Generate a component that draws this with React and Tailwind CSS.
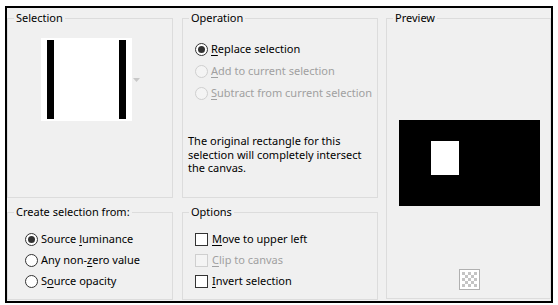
import React from 'react';

const Group = ({ title, className, children }) => (
    <div className={`relative border border-[#dcdcdc] ${className}`}>
        <span className="absolute -top-[9px] left-[6px] bg-[#f0f0f0] px-[2px] leading-[16px] text-black">{title}</span>
        {children}
    </div>
);

const Radio = ({ checked, disabled }) => (
    <span
        className={`flex h-[13px] w-[13px] shrink-0 items-center justify-center rounded-full border ${
            disabled ? 'border-[#cfcfcf] bg-[#f4f4f4]' : 'border-[#333333] bg-white'
        }`}
    >
        {checked && <span className="h-[7px] w-[7px] rounded-full bg-[#333333]" />}
    </span>
);

const Check = ({ disabled }) => (
    <span
        className={`block h-[13px] w-[13px] shrink-0 border ${
            disabled ? 'border-[#cfcfcf] bg-[#f4f4f4]' : 'border-[#333333] bg-white'
        }`}
    />
);

// label with the access key underlined
const Label = ({ before = '', keyChar, after, disabled }) => (
    <span className={disabled ? 'text-[#a0a0a0]' : 'text-black'}>
        {before}
        <u className="underline-offset-[2px]">{keyChar}</u>
        {after}
    </span>
);

const CheckerIcon = () => (
    <svg width="21" height="21" viewBox="0 0 21 21">
        <rect x="0.5" y="0.5" width="20" height="20" fill="#ffffff" stroke="#b0b0b0" />
        {[0, 1, 2, 3, 4].map((r) =>
            [0, 1, 2, 3, 4].map((c) =>
                (r + c) % 2 === 0 ? (
                    <rect key={`${r}-${c}`} x={3 + c * 3} y={3 + r * 3} width="3" height="3" fill="#c4c4c4" />
                ) : null
            )
        )}
    </svg>
);

const App = () => {
    return (
        <div className="h-[305px] w-[558px] bg-white pl-[5px] pt-[6px] font-['Noto_Sans',sans-serif] text-[11px]">
            <div className="flex h-[297px] w-[548px] border-2 border-black bg-[#f0f0f0] pt-[10px]">
                {/* left column */}
                <div className="flex w-[166px] flex-col">
                    <Group title="Selection" className="h-[180px]">
                        <div className="flex items-center pl-[33px] pt-[19px]">
                            <div className="relative h-[83px] w-[91px] bg-white">
                                <div className="absolute left-[6px] top-[2px] h-[79px] w-[7px] bg-black" />
                                <div className="absolute left-[78px] top-[2px] h-[79px] w-[7px] bg-black" />
                            </div>
                            <svg className="ml-[1px]" width="7" height="4" viewBox="0 0 7 4">
                                <path d="M0 0 H7 L3.5 4 Z" fill="#c8c8c8" />
                            </svg>
                        </div>
                    </Group>
                    <Group title="Create selection from:" className="mt-[14px] h-[88px]">
                        <div className="flex flex-col pl-[17px] pt-[16px]">
                            <div className="flex h-[21px] items-center gap-[3px]">
                                <Radio checked />
                                <Label before="Source " keyChar="l" after="uminance" />
                            </div>
                            <div className="flex h-[21px] items-center gap-[3px]">
                                <Radio />
                                <Label before="Any non-" keyChar="z" after="ero value" />
                            </div>
                            <div className="flex h-[21px] items-center gap-[3px]">
                                <Radio />
                                <Label before="S" keyChar="o" after="urce opacity" />
                            </div>
                        </div>
                    </Group>
                </div>

                {/* middle column */}
                <div className="ml-[9px] flex w-[196px] flex-col">
                    <Group title="Operation" className="h-[180px]">
                        <div className="flex flex-col pl-[12px] pt-[19px]">
                            <div className="flex h-[22px] items-center gap-[3px]">
                                <Radio checked />
                                <Label keyChar="R" after="eplace selection" />
                            </div>
                            <div className="flex h-[22px] items-center gap-[3px]">
                                <Radio disabled />
                                <Label keyChar="A" after="dd to current selection" disabled />
                            </div>
                            <div className="flex h-[22px] items-center gap-[3px]">
                                <Radio disabled />
                                <Label keyChar="S" after="ubtract from current selection" disabled />
                            </div>
                        </div>
                        <p className="mt-[30px] pl-[5px] leading-[13.5px] text-black">
                            The original rectangle for this
                            <br />
                            selection will completely intersect
                            <br />
                            the canvas.
                        </p>
                    </Group>
                    <Group title="Options" className="mt-[14px] h-[88px]">
                        <div className="flex flex-col pl-[12px] pt-[16px]">
                            <div className="flex h-[21px] items-center gap-[4px]">
                                <Check />
                                <Label keyChar="M" after="ove to upper left" />
                            </div>
                            <div className="flex h-[21px] items-center gap-[4px]">
                                <Check disabled />
                                <Label keyChar="C" after="lip to canvas" disabled />
                            </div>
                            <div className="flex h-[21px] items-center gap-[4px]">
                                <Check />
                                <Label keyChar="I" after="nvert selection" />
                            </div>
                        </div>
                    </Group>
                </div>

                {/* right column */}
                <Group title="Preview" className="ml-[8px] h-[281px] w-[165px]">
                    <div className="flex flex-col pl-[12px] pt-[101px]">
                        <div className="relative h-[86px] w-[141px] bg-black">
                            <div className="absolute left-[32px] top-[21px] h-[34px] w-[28px] bg-white" />
                        </div>
                        <div className="ml-[60px] mt-[63px]">
                            <CheckerIcon />
                        </div>
                    </div>
                </Group>
            </div>
        </div>
    );
};

export default App;
